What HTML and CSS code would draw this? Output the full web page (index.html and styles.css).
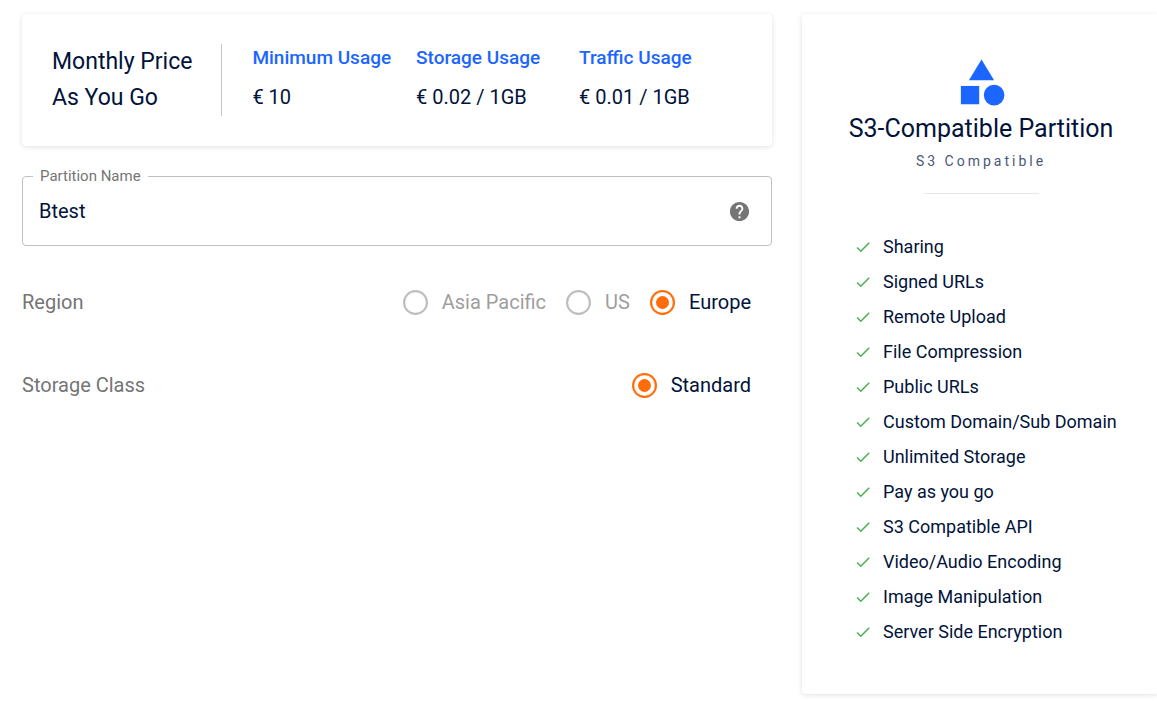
FILE: index.html
```html
<!DOCTYPE html>
<html lang="en">
<head>
<meta charset="utf-8">
<meta name="viewport" content="width=device-width, initial-scale=1">
<title>Create Partition</title>
<link rel="stylesheet" href="styles.css">
</head>
<body>
<svg class="sprite" aria-hidden="true">
  <symbol id="check" viewBox="0 0 24 24"><path d="M9 16.17 4.83 12l-1.42 1.41L9 19 21 7l-1.41-1.41z"/></symbol>
</svg>
<main class="page">
  <form class="settings">
    <section class="card pricing">
      <h2 class="pricing-title">Monthly Price<br>As You Go</h2>
      <dl class="rates">
        <div class="rate"><dt>Minimum Usage</dt><dd>€ 10</dd></div>
        <div class="rate"><dt>Storage Usage</dt><dd>€ 0.02 / 1GB</dd></div>
        <div class="rate"><dt>Traffic Usage</dt><dd>€ 0.01 / 1GB</dd></div>
      </dl>
    </section>

    <div class="field">
      <label class="field-label" for="partition-name">Partition Name</label>
      <input class="field-input" id="partition-name" type="text" value="Btest">
      <button class="help" type="button" aria-label="Help">
        <svg viewBox="0 0 24 24"><path d="M12 2C6.48 2 2 6.48 2 12s4.48 10 10 10 10-4.480 10-10S17.520 2 12 2zm1 17h-2v-2h2v2zm2.070-7.750-.9.920C13.450 12.900 13 13.500 13 15h-2v-.5c0-1.100.45-2.100 1.170-2.830l1.240-1.260c.37-.36.590-.86.590-1.410 0-1.100-.9-2-2-2s-2 .9-2 2H8c0-2.210 1.790-4 4-4s4 1.790 4 4c0 .88-.36 1.680-.93 2.250z"/></svg>
      </button>
    </div>

    <div class="option-row" role="radiogroup" aria-labelledby="region-label">
      <span class="option-title" id="region-label">Region</span>
      <div class="options">
        <label class="option"><input type="radio" name="region" disabled><span>Asia Pacific</span></label>
        <label class="option"><input type="radio" name="region" disabled><span>US</span></label>
        <label class="option"><input type="radio" name="region" checked><span>Europe</span></label>
      </div>
    </div>
    <div class="option-row" role="radiogroup" aria-labelledby="class-label">
      <span class="option-title" id="class-label">Storage Class</span>
      <div class="options">
        <label class="option"><input type="radio" name="class" checked><span>Standard</span></label>
      </div>
    </div>
  </form>

  <aside class="card summary">
    <svg class="summary-icon" viewBox="0 0 24 24" aria-hidden="true">
      <path d="m12 2-5.500 9h11z"/><circle cx="17.500" cy="17.500" r="4.500"/><path d="M3 13.500h8v8H3z"/>
    </svg>
    <h1 class="summary-title">S3-Compatible Partition</h1>
    <p class="summary-type">S3 Compatible</p>
    <hr class="rule">
    <ul class="features">
      <li><svg><use href="#check"/></svg>Sharing</li>
      <li><svg><use href="#check"/></svg>Signed URLs</li>
      <li><svg><use href="#check"/></svg>Remote Upload</li>
      <li><svg><use href="#check"/></svg>File Compression</li>
      <li><svg><use href="#check"/></svg>Public URLs</li>
      <li><svg><use href="#check"/></svg>Custom Domain/Sub Domain</li>
      <li><svg><use href="#check"/></svg>Unlimited Storage</li>
      <li><svg><use href="#check"/></svg>Pay as you go</li>
      <li><svg><use href="#check"/></svg>S3 Compatible API</li>
      <li><svg><use href="#check"/></svg>Video/Audio Encoding</li>
      <li><svg><use href="#check"/></svg>Image Manipulation</li>
      <li><svg><use href="#check"/></svg>Server Side Encryption</li>
    </ul>
  </aside>
</main>
</body>
</html>
```
FILE: styles.css
```css
* { box-sizing: border-box; }
body {
  margin: 0;
  background: #fff;
  color: #01133a;
  font-family: Roboto, "Liberation Sans", sans-serif;
  font-size: 18px;
}
h1, h2, p, dl, dd, ul { margin: 0; padding: 0; }
.sprite { position: absolute; width: 0; height: 0; }

.page {
  display: grid;
  grid-template-columns: 750fr 355fr;
  gap: 30px;
  align-items: start;
  padding: 14px 0 7px 22px;
}
.card {
  background: #fff;
  border-radius: 4px;
  box-shadow: 0 1px 5px rgba(10, 20, 50, 0.13);
}

.pricing { display: flex; align-items: flex-start; padding: 30px; }
.pricing-title {
  padding-right: 29px;
  border-right: 1px solid #c4c4c4;
  font-size: 23px;
  font-weight: 400;
  line-height: 36px;
  white-space: nowrap;
}
.rates { display: flex; gap: 25px; padding-left: 30px; }
.rate { line-height: 26px; }
.rate:nth-child(2) { min-width: 138px; }
.rate dt { color: #1a66ff; font-size: 19px; font-weight: 500; line-height: 28px; }
.rate dd { margin-top: 12px; font-size: 20px; }

.field {
  position: relative;
  display: flex;
  align-items: center;
  height: 70px;
  margin-top: 30px;
  padding: 0 20px 0 16px;
  border: 1px solid #c0c0c0;
  border-radius: 4px;
}
.field-label {
  position: absolute;
  top: -12px;
  left: 10px;
  padding: 0 7px;
  background: #fff;
  color: #757575;
  font-size: 15px;
  line-height: 22px;
}
.field-input {
  flex: 1;
  min-width: 0;
  padding: 0;
  border: 0;
  outline: 0;
  background: none;
  color: inherit;
  font: 400 20px/28px Roboto, "Liberation Sans", sans-serif;
}
.help { display: flex; padding: 0; border: 0; background: none; }
.help svg { width: 23px; height: 23px; fill: #757575; }

.option-row {
  display: flex;
  align-items: center;
  justify-content: space-between;
  margin-top: 43px;
  padding-right: 21px;
  font-size: 20px;
  line-height: 26px;
}
.option-row + .option-row { margin-top: 57px; }
.option-title { color: #757575; }
.options { display: flex; gap: 20px; }
.option { display: flex; align-items: center; gap: 14px; }
.option input {
  appearance: none;
  display: grid;
  place-content: center;
  width: 25px;
  height: 25px;
  margin: 0;
  border: 2px solid #bdbdbd;
  border-radius: 50%;
  box-shadow: inset 0 0 1px #bdbdbd;
}
.option input:checked { border-color: #ff6d0a; box-shadow: inset 0 0 1px #ff6d0a; }
.option input:checked::before {
  content: "";
  width: 13px;
  height: 13px;
  border-radius: 50%;
  background: #ff6d0a;
}
.option input:disabled + span { color: #9e9e9e; }

.summary {
  display: flex;
  flex-direction: column;
  align-items: center;
  padding: 41px 0 45px 3px;
  border-radius: 4px 0 0 4px;
}
.summary-icon { width: 55px; height: 55px; fill: #1a66ff; }
.summary-title { font-size: 25px; font-weight: 400; line-height: 38px; }
.summary-type {
  color: #4a5878;
  font-size: 14px;
  line-height: 26px;
  letter-spacing: 3px;
}
.rule {
  width: 115px;
  margin: 19px 0 35px;
  border: 0;
  border-top: 1px solid #e8e8e8;
}
.features {
  align-self: stretch;
  padding-left: 49px;
  list-style: none;
}
.features li {
  display: flex;
  align-items: center;
  gap: 11px;
  line-height: 35px;
}
.features svg { width: 18px; height: 18px; fill: #4caf50; }
```
